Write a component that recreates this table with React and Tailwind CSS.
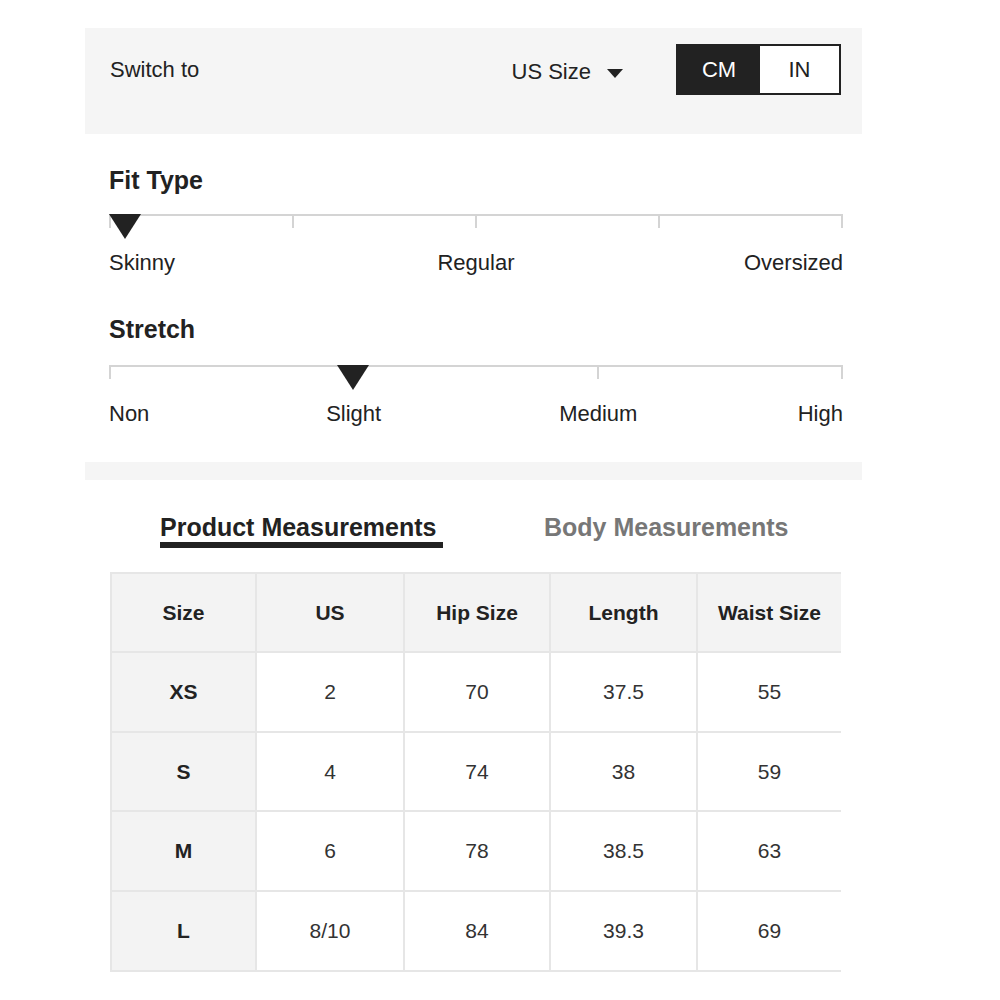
import React from 'react';

const fitLabels = ['Skinny', 'Regular', 'Oversized'];
const stretchLabels = ['Non', 'Slight', 'Medium', 'High'];

const headers = ['Size', 'US', 'Hip Size', 'Length', 'Waist Size'];
const rows = [
  ['XS', '2', '70', '37.5', '55'],
  ['S', '4', '74', '38', '59'],
  ['M', '6', '78', '38.5', '63'],
  ['L', '8/10', '84', '39.3', '69'],
];

function Marker({ className }) {
  return (
    <svg className={`absolute top-0 ${className}`} width="32" height="25" viewBox="0 0 32 25">
      <polygon points="0,0 32,0 16,25" fill="#222" />
    </svg>
  );
}

function Track({ segments, marker }) {
  return (
    <div className="relative h-[26px]">
      <div className="flex border-t-2 border-[#d4d4d4]">
        {Array.from({ length: segments }).map((_, i) => (
          <div
            key={i}
            className={`flex-1 h-[12px] border-r-2 border-[#d4d4d4] ${i === 0 ? 'border-l-2' : ''}`}
          />
        ))}
      </div>
      {marker}
    </div>
  );
}

function Labels({ items }) {
  return (
    <div className="flex justify-between text-[22px] text-[#222]">
      {items.map((label, i) => {
        const align =
          i === 0 ? 'justify-start' : i === items.length - 1 ? 'justify-end' : 'justify-center';
        return (
          <div key={label} className={`w-0 flex whitespace-nowrap ${align}`}>
            {label}
          </div>
        );
      })}
    </div>
  );
}

export default function App() {
  return (
    <div
      className="min-h-[1000px] bg-white pt-[28px] pl-[85px] text-[#222]"
      style={{ fontFamily: '"Liberation Sans", Arial, sans-serif' }}
    >
      <div className="w-[777px]">
        {/* switch panel */}
        <div className="h-[106px] bg-[#f5f5f5] pt-[16px] pl-[25px] pr-[21px] flex items-start">
          <div className="h-[51px] flex items-center text-[22px]">Switch to</div>
          <div className="ml-auto h-[51px] flex items-center text-[22px] pt-[4px]">
            US Size
            <svg className="ml-[16px] mt-[4px]" width="16" height="9" viewBox="0 0 16 9">
              <polygon points="0,0 16,0 8,9" fill="#222" />
            </svg>
          </div>
          <div className="ml-[53px] flex h-[51px] w-[165px] border-2 border-[#222] text-[22px]">
            <div className="w-[82px] bg-[#222] text-white flex items-center justify-center">CM</div>
            <div className="flex-1 bg-white flex items-center justify-center">IN</div>
          </div>
        </div>

        {/* fit type */}
        <div className="pl-[24px] pr-[19px] pt-[31px]">
          <div className="text-[25px] font-bold leading-[30px]">Fit Type</div>
          <div className="mt-[19px]">
            <Track segments={4} marker={<Marker className="left-0" />} />
          </div>
          <div className="mt-[10px] leading-[26px]">
            <Labels items={fitLabels} />
          </div>

          <div className="mt-[38px] text-[25px] font-bold leading-[30px]">Stretch</div>
          <div className="mt-[21px]">
            <Track segments={3} marker={<Marker className="left-[228px]" />} />
          </div>
          <div className="mt-[10px] leading-[26px]">
            <Labels items={stretchLabels} />
          </div>
        </div>

        <div className="mt-[35px] h-[18px] bg-[#f5f5f5]" />

        {/* tabs */}
        <div className="flex pl-[75px] pt-[32px] gap-[101px] text-[25px] font-bold leading-[30px]">
          <div className="flex flex-col">
            <span>Product Measurements</span>
            <div className="h-[6px] w-[283px] bg-[#222]" />
          </div>
          <span className="text-[#777]">Body Measurements</span>
        </div>
      </div>

      {/* table */}
      <div className="mt-[24px] ml-[25px] w-[731px] border-t-2 border-l-2 border-[#e6e6e6] grid grid-cols-[145px_148px_146px_147px_143px] text-[21px]">
        {headers.map((h, i) => (
          <div
            key={h}
            className={`h-[79px] flex items-center justify-center bg-[#f3f3f3] font-bold border-b-2 border-[#e6e6e6] ${
              i < 4 ? 'border-r-2' : ''
            }`}
          >
            {h}
          </div>
        ))}
        {rows.map((row, r) =>
          row.map((cell, i) => (
            <div
              key={row[0] + i}
              className={`flex items-center justify-center border-b-2 border-[#e6e6e6] ${
                r === 1 ? 'h-[79px]' : 'h-[80px]'
              } ${i < 4 ? 'border-r-2' : ''} ${
                i === 0 ? 'bg-[#f3f3f3] font-bold' : 'bg-white text-[#333]'
              }`}
            >
              {cell}
            </div>
          ))
        )}
      </div>
    </div>
  );
}
